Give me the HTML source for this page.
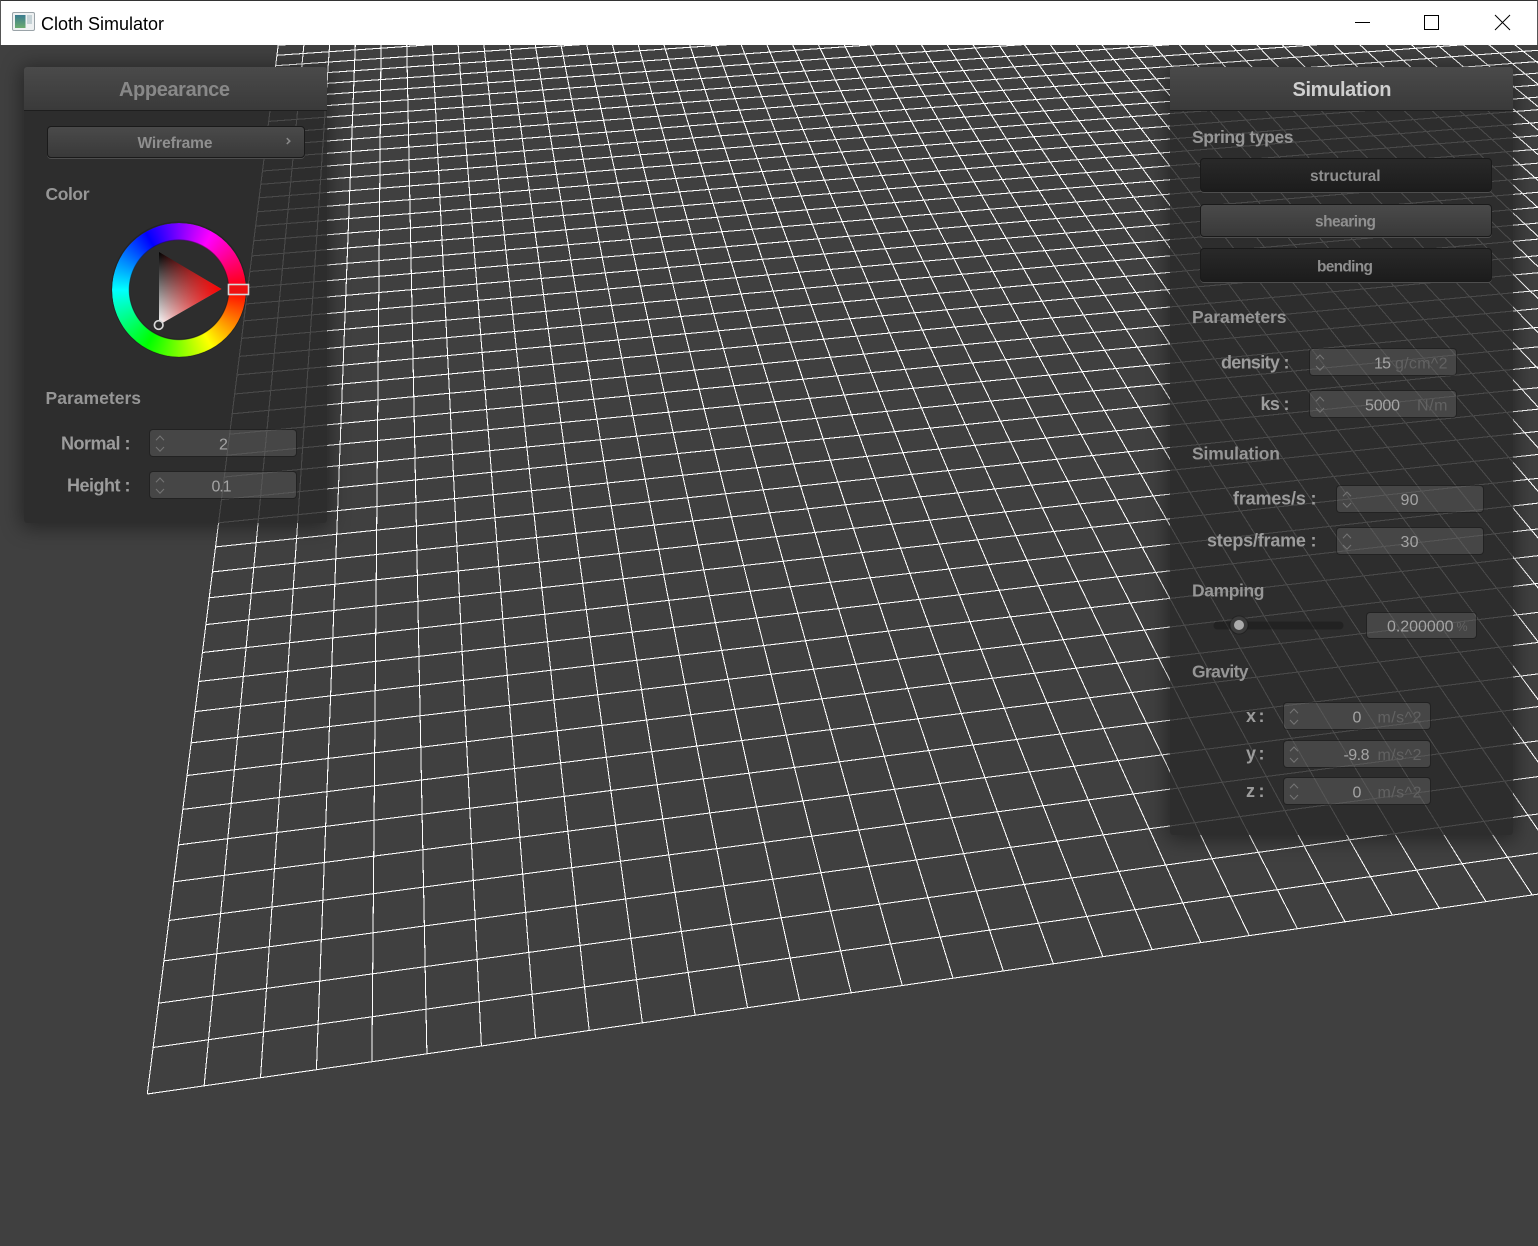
<!DOCTYPE html>
<html lang="en">
<head>
<meta charset="utf-8">
<title>Cloth Simulator</title>
<style>
html,body{margin:0;padding:0;background:#404040;}
body{position:relative;width:1538px;height:1246px;overflow:hidden;font-family:"Liberation Sans",sans-serif;}
svg{position:absolute;left:0;top:0;}
.abs,.panel,.head,.btn,.spin,.tbar,.ring{position:absolute;box-sizing:border-box;}
.tbar{left:0;top:0;width:1538px;height:45px;background:#fff;border-top:1px solid #333;border-left:1px solid #555;border-right:1px solid #555;}
.panel{background:rgba(42,42,42,.85);box-shadow:0 2px 20px 3px rgba(0,0,0,.42);border-radius:3px;}
.head{left:0;top:0;height:44px;width:100%;background:linear-gradient(#4a4a4a,#3a3a3a);border-bottom:1px solid #1e1e1e;border-radius:3px 3px 0 0;}
.btn{border:1px solid #1a1a1a;border-radius:4px;box-shadow:0 1px 0 #4e4e4e;}
.up{background:linear-gradient(#4a4a4a,#393939);}
.down{background:linear-gradient(#292929,#1c1c1c);}
.spin{background:rgba(100,100,100,.47);border-radius:3px;box-shadow:0 0 0 1px rgba(26,26,26,.55);}
.ring{left:112px;top:222.5px;width:134px;height:134px;border-radius:50%;background:conic-gradient(from 90deg,#f00,#ff0,#0f0,#0ff,#00f,#f0f,#f00);-webkit-mask:radial-gradient(circle,transparent 49.5px,#000 50.5px);mask:radial-gradient(circle,transparent 49.5px,#000 50.5px);}
text{font-family:"Liberation Sans",sans-serif;}
.t{font-weight:700;font-size:17.5px;fill:#969696;}
.l{font-weight:700;font-size:18px;fill:#9c9c9c;}
.b{font-weight:700;font-size:15.5px;fill:#8f8f8f;}
.v{font-size:16px;fill:#a4a4a4;}
.u{font-size:16px;fill:#626262;}
</style>
</head>
<body>
<svg width="1538" height="1246" viewBox="0 0 1538 1246" shape-rendering="crispEdges">
<path fill="none" stroke="#fff" stroke-width="1.06" d="
M147.3 1094L389 -843M204.1 1085.8L389 -843M260.5 1077.7L389 -843M316.4 1069.7L389 -843M371.9 1061.7L389 -843M426.9 1053.8L389 -843M481.4 1046L389 -843M535.5 1038.2L389 -843M589.2 1030.5L389 -843M642.4 1022.8L389 -843
M695.2 1015.3L389 -843M747.6 1007.8L389 -843M799.6 1000.3L389 -843M851.2 992.8L389 -843M902.3 985.5L389 -843M953 978.2L389 -843M1003.4 971L389 -843M1053.4 963.8L389 -843M1102.9 956.7L389 -843M1152.1 949.6L389 -843
M1200.9 942.6L389 -843M1249.3 935.6L389 -843M1297.4 928.7L389 -843M1345.1 921.9L389 -843M1392.4 915.1L389 -843M1439.4 908.3L389 -843M1486 901.6L389 -843M1532.3 895L389 -843M1578.2 888.4L389 -843M1623.8 881.8L389 -843
M1669 875.3L389 -843M1713.9 868.9L389 -843M1758.5 862.5L389 -843M1802.7 856.1L389 -843M1846.7 849.8L389 -843M1890.3 843.5L389 -843M1933.6 837.3L389 -843M1976.5 831.1L389 -843M2019.2 825L389 -843M2061.5 818.9L389 -843
M2103.6 812.9L389 -843M2145.3 806.9L389 -843M2186.8 800.9L389 -843M2227.9 795L389 -843M2268.8 789.1L389 -843M2309.4 783.3L389 -843M2349.7 777.5L389 -843M2389.7 771.7L389 -843M2429.5 766L389 -843M2469 760.3L389 -843M2508 754.7L389 -843
M147.3 1094L13804 -868.6M153.1 1047.5L13804 -868.6M158.6 1003.2L13804 -868.6M163.9 960.9L13804 -868.6M169 920.5L13804 -868.6M173.8 881.8L13804 -868.6M178.4 844.9L13804 -868.6M182.8 809.4L13804 -868.6M187 775.5L13804 -868.6M191.1 742.9L13804 -868.6
M195 711.6L13804 -868.6M198.8 681.5L13804 -868.6M202.4 652.5L13804 -868.6M205.9 624.6L13804 -868.6M209.2 597.8L13804 -868.6M212.4 571.9L13804 -868.6M215.6 546.9L13804 -868.6M218.6 522.8L13804 -868.6M221.5 499.5L13804 -868.6M224.3 477L13804 -868.6
M227 455.2L13804 -868.6M229.6 434.2L13804 -868.6M232.2 413.8L13804 -868.6M234.6 394L13804 -868.6M237 374.9L13804 -868.6M239.3 356.4L13804 -868.6M241.6 338.4L13804 -868.6M243.8 320.9L13804 -868.6M245.9 304L13804 -868.6M247.9 287.5L13804 -868.6
M249.9 271.5L13804 -868.6M251.9 255.9L13804 -868.6M253.8 240.8L13804 -868.6M255.6 226.1L13804 -868.6M257.4 211.8L13804 -868.6M259.1 197.8L13804 -868.6M260.8 184.3L13804 -868.6M262.5 171L13804 -868.6M264.1 158.1L13804 -868.6M265.6 145.6L13804 -868.6
M267.2 133.3L13804 -868.6M268.7 121.4L13804 -868.6M270.1 109.7L13804 -868.6M271.5 98.3L13804 -868.6M272.9 87.2L13804 -868.6M274.3 76.3L13804 -868.6M275.6 65.7L13804 -868.6M276.9 55.3L13804 -868.6M278.2 45.2L13804 -868.6"/>
</svg>

<div class="tbar"></div>

<div class="panel" style="left:24px;top:67px;width:303px;height:456px;"><div class="head"></div></div>
<div class="panel" style="left:1170px;top:67px;width:343px;height:768px;"><div class="head"></div></div>

<div class="btn up" style="left:47px;top:126px;width:258px;height:32px;"></div>
<div class="btn down" style="left:1200px;top:158px;width:292px;height:34px;"></div>
<div class="btn up" style="left:1200px;top:204px;width:292px;height:33px;"></div>
<div class="btn down" style="left:1200px;top:248px;width:292px;height:34px;"></div>

<div class="spin" style="left:150px;top:430px;width:146px;height:26px;"></div>
<div class="spin" style="left:150px;top:472px;width:146px;height:26px;"></div>
<div class="spin" style="left:1310px;top:349px;width:146px;height:26px;"></div>
<div class="spin" style="left:1310px;top:391px;width:146px;height:26px;"></div>
<div class="spin" style="left:1337px;top:486px;width:146px;height:26px;"></div>
<div class="spin" style="left:1337px;top:528px;width:146px;height:26px;"></div>
<div class="spin" style="left:1367px;top:613px;width:109px;height:25px;"></div>
<div class="spin" style="left:1284px;top:703px;width:146px;height:26px;"></div>
<div class="spin" style="left:1284px;top:741px;width:146px;height:26px;"></div>
<div class="spin" style="left:1284px;top:778px;width:146px;height:26px;"></div>

<div class="ring"></div>

<svg width="1538" height="1246" viewBox="0 0 1538 1246">
<defs>
<linearGradient id="bw" gradientUnits="userSpaceOnUse" x1="159" y1="252" x2="159" y2="325"><stop offset="0" stop-color="#000"/><stop offset="1" stop-color="#fff"/></linearGradient>
<linearGradient id="rd" gradientUnits="userSpaceOnUse" x1="159" y1="289" x2="221.5" y2="289"><stop offset="0" stop-color="#f00" stop-opacity="0"/><stop offset="1" stop-color="#f00"/></linearGradient>
<linearGradient id="ic" x1="0" y1="0" x2="0" y2="1"><stop offset="0" stop-color="#3b7c90"/><stop offset="1" stop-color="#6bab6e"/></linearGradient>
</defs>

<!-- title bar -->
<rect x="12.5" y="12.5" width="22" height="18" rx="1.5" fill="#eef1f2" stroke="#9aa3a8"/>
<rect x="15" y="15" width="10.5" height="13" fill="url(#ic)"/>
<rect x="27" y="15" width="5" height="9" fill="#c5d2d6"/>
<text x="41" y="30" font-size="18" fill="#000" textLength="123">Cloth Simulator</text>
<path d="M1355 22.5h15" stroke="#000" stroke-width="1" fill="none"/>
<rect x="1424.5" y="15.5" width="14" height="14" fill="none" stroke="#000" stroke-width="1"/>
<path d="M1495 15l15 15M1510 15l-15 15" stroke="#000" stroke-width="1" fill="none"/>

<!-- appearance -->
<text x="119" y="96" font-size="20" font-weight="700" fill="#888" textLength="111">Appearance</text>
<text class="b" x="137.5" y="148" textLength="75">Wireframe</text>
<path d="M286.8 138.2l3 2.9-3 2.9" stroke="#8a8a8a" stroke-width="1.5" fill="none"/>
<text class="t" x="45.5" y="200" textLength="44">Color</text>

<circle cx="179" cy="289.5" r="67.5" fill="none" stroke="rgba(0,0,0,.22)" stroke-width="1"/>
<circle cx="179" cy="289.5" r="49.8" fill="none" stroke="rgba(0,0,0,.25)" stroke-width="1"/>
<polygon points="159,252 221.5,289 159,325" fill="url(#bw)"/>
<polygon points="159,252 221.5,289 159,325" fill="url(#rd)"/>
<circle cx="158.7" cy="325" r="4.3" fill="#2c2c2c" stroke="#d8d8d8" stroke-width="1.7"/>
<rect x="228.5" y="284.5" width="20" height="10" fill="#ee1111" stroke="#d8d8d8" stroke-width="1.6"/>

<text class="t" x="45.5" y="404" textLength="95.5">Parameters</text>
<text class="l" x="61" y="449.5" textLength="69.5">Normal :</text>
<text class="l" x="67" y="491.5" textLength="63.5">Height :</text>
<text class="v" x="219" y="449.5" textLength="8.5">2</text>
<text class="v" x="211.5" y="491.5" textLength="20">0.1</text>

<!-- simulation -->
<text x="1292.5" y="96" font-size="20" font-weight="700" fill="#cfcfcf" textLength="99">Simulation</text>
<text class="t" x="1192" y="143" textLength="101.5">Spring types</text>
<text class="b" x="1310" y="181" textLength="70.5">structural</text>
<text class="b" x="1315" y="226.5" textLength="61">shearing</text>
<text class="b" x="1317" y="271.5" textLength="56">bending</text>
<text class="t" x="1192" y="323" textLength="94.5">Parameters</text>
<text class="l" x="1221" y="368.5" textLength="68.5">density :</text>
<text class="l" x="1260.5" y="410" textLength="29">ks :</text>
<text class="v" x="1374" y="368.5" textLength="17">15</text>
<text class="u" x="1395" y="368.5" textLength="52.5">g/cm^2</text>
<text class="v" x="1365" y="410.5" textLength="35">5000</text>
<text class="u" x="1417" y="410.5" textLength="30.5">N/m</text>
<text class="t" x="1192" y="459.5" textLength="88">Simulation</text>
<text class="l" x="1233" y="504.5" textLength="83.5">frames/s :</text>
<text class="l" x="1207" y="546.5" textLength="109.5">steps/frame :</text>
<text class="v" x="1400.5" y="505" textLength="18">90</text>
<text class="v" x="1400.5" y="547" textLength="18">30</text>
<text class="t" x="1192" y="596.5" textLength="72.5">Damping</text>
<rect x="1213.5" y="621.5" width="130" height="8" rx="4" fill="rgba(24,24,24,.5)"/>
<circle cx="1239" cy="625" r="9" fill="#3b3b3b" stroke="rgba(20,20,20,.5)" stroke-width="1"/>
<circle cx="1239" cy="625" r="5" fill="#ababab"/>
<text class="v" x="1387" y="631.5" textLength="66.5">0.200000</text>
<text class="u" x="1456.5" y="631" font-size="12.5" style="font-size:12.5px">%</text>
<text class="t" x="1192" y="677.5" textLength="56.5">Gravity</text>
<text class="l" x="1246" y="722" textLength="18.5">x :</text>
<text class="l" x="1246" y="759.5" textLength="18.5">y :</text>
<text class="l" x="1246" y="797" textLength="18.5">z :</text>
<text class="v" x="1352.5" y="722.5" textLength="8.5">0</text>
<text class="v" x="1343.5" y="760" textLength="26">-9.8</text>
<text class="v" x="1352.5" y="797.5" textLength="8.5">0</text>
<text class="u" x="1377.5" y="722.5" textLength="44">m/s^2</text>
<text class="u" x="1377.5" y="760" textLength="44">m/s^2</text>
<text class="u" x="1377.5" y="797.5" textLength="44">m/s^2</text>

<!-- spin arrows -->
<g fill="none" stroke="#747474" stroke-width="1.1">
<path transform="translate(149,429.5)" d="M7 10.7l4-4.2 4 4.2M7 17.5l4 4.2 4-4.2"/>
<path transform="translate(149,471.5)" d="M7 10.7l4-4.2 4 4.2M7 17.5l4 4.2 4-4.2"/>
<path transform="translate(1309,348.5)" d="M7 10.7l4-4.2 4 4.2M7 17.5l4 4.2 4-4.2"/>
<path transform="translate(1309,390.5)" d="M7 10.7l4-4.2 4 4.2M7 17.5l4 4.2 4-4.2"/>
<path transform="translate(1336,485.5)" d="M7 10.7l4-4.2 4 4.2M7 17.5l4 4.2 4-4.2"/>
<path transform="translate(1336,527.5)" d="M7 10.7l4-4.2 4 4.2M7 17.5l4 4.2 4-4.2"/>
<path transform="translate(1283,702.5)" d="M7 10.7l4-4.2 4 4.2M7 17.5l4 4.2 4-4.2"/>
<path transform="translate(1283,740.5)" d="M7 10.7l4-4.2 4 4.2M7 17.5l4 4.2 4-4.2"/>
<path transform="translate(1283,777.5)" d="M7 10.7l4-4.2 4 4.2M7 17.5l4 4.2 4-4.2"/>
</g>
</svg>
</body>
</html>
